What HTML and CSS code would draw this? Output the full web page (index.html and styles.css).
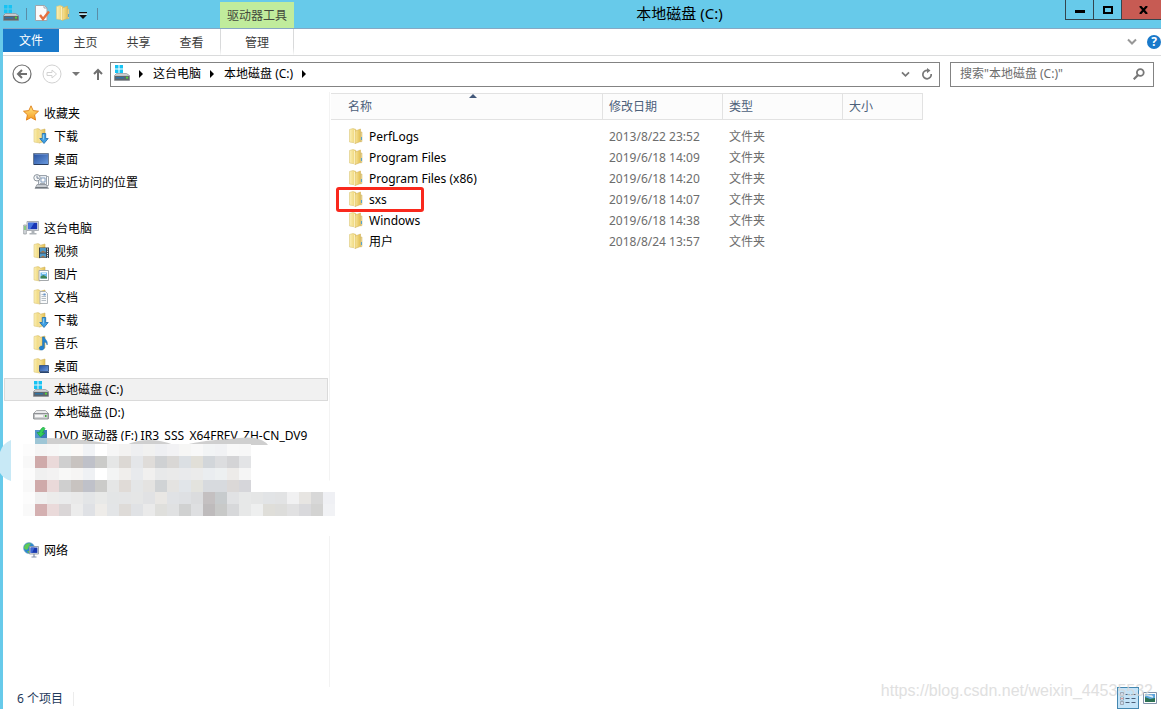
FILE: index.html
```html
<!DOCTYPE html>
<html lang="zh-CN">
<head>
<meta charset="utf-8">
<title>本地磁盘 (C:)</title>
<link rel="stylesheet" href="styles.css">
</head>
<body>
<svg class="defs" aria-hidden="true">
  <defs>
    <linearGradient id="gFolder" x1="0" x2="1" y1="0" y2="0"><stop offset="0" stop-color="#fbf0b6"/><stop offset="1" stop-color="#ecd06c"/></linearGradient>
    <linearGradient id="gFlap" x1="0" x2="1" y1="0" y2="0"><stop offset="0" stop-color="#f8e59a"/><stop offset="1" stop-color="#e2bf52"/></linearGradient>
    <linearGradient id="gScreen" x1="0" x2="1" y1="0" y2="1"><stop offset="0" stop-color="#264f9c"/><stop offset="1" stop-color="#6b9be0"/></linearGradient>
    <linearGradient id="gDisk" x1="0" x2="0" y1="0" y2="1"><stop offset="0" stop-color="#d8dadd"/><stop offset="1" stop-color="#83878d"/></linearGradient>
    <linearGradient id="gStar" x1="0" x2="0" y1="0" y2="1"><stop offset="0" stop-color="#ffe98a"/><stop offset="1" stop-color="#f79a1c"/></linearGradient>
  </defs>
  <symbol id="folder" viewBox="0 0 16 16">
    <path d="M1.500 1.500 5 .5l3 1V15l-6.500-1z" fill="url(#gFolder)" stroke="#dcc679" stroke-width=".6"/>
    <path d="M7 3.200 12.500 1v12.500L7 15.500z" fill="url(#gFlap)" stroke="#d3b45c" stroke-width=".6"/>
    <path d="M12.500 4h1.500v9.500l-1.500.5z" fill="#ecd795" stroke="#cdb05c" stroke-width=".5"/>
    <path d="M6.500 2v13" stroke="#fff6d0" stroke-width=".8"/><path d="M13.500 9v3" stroke="#55a4cf"/>
  </symbol>
  <symbol id="halfFolder" viewBox="0 0 16 16">
    <path d="M1 1.500 5 .5l2 1V15l-6-1z" fill="url(#gFolder)" stroke="#dcc679" stroke-width=".6"/>
    <path d="M6.500 2.500 12 1v12l-5.500 2z" fill="url(#gFlap)" stroke="#d2b45e" stroke-width=".6"/>
    <path d="M6.200 2v12.500" stroke="#fff3c4" stroke-width=".8"/>
  </symbol>
  <symbol id="download" viewBox="0 0 16 16">
    <use href="#halfFolder"/><path d="M9.300 5.500h3.400v5h2.500L11 15.500 6.800 10.500h2.500z" fill="#3f9fe2" stroke="#1c6bab" stroke-width=".8"/>
    <path d="M10.300 6.500v5" stroke="#9ad7fb"/>
  </symbol>
  <symbol id="video" viewBox="0 0 16 16">
    <use href="#halfFolder"/><path d="M6 4.500h10V15H6z" fill="#39434d"/><path d="M7 5h6v4.500H7zM7 10.500h6v4H7z" fill="#4e98c8"/><path d="m7 9.500 3-2 3 2zm0 5 3-2 3 2z" fill="#a3754b"/><path d="M14.500 5.500v10" stroke="#fff" stroke-dasharray="1.200 1"/>
  </symbol>
  <symbol id="pictures" viewBox="0 0 16 16">
    <use href="#halfFolder"/><path d="M6 4.500h9.500v10H6z" fill="#fff" stroke="#a5a9ac"/><path d="M7.500 6.500H14v6H7.500z" fill="#6db8ea"/><path d="m7.500 12.500 0-2 3-1.500 3.500 2v1.500z" fill="#3f8554"/><path d="M9 7.500h4" stroke="#d7effd"/>
  </symbol>
  <symbol id="documents" viewBox="0 0 16 16">
    <use href="#halfFolder"/><path d="M7 2.500h5.500l2 2v10H7z" fill="#f9fafb" stroke="#9ca3aa" stroke-width=".8"/><path d="M8.500 5.500H13m-4.500 2H13m-4.500 2H13m-4.500 2H13" stroke="#a3adb6" stroke-width=".8"/><path d="M10.500 4.500h2v2h-2z" fill="#6797cc"/>
  </symbol>
  <symbol id="music" viewBox="0 0 16 16">
    <use href="#halfFolder"/><path d="M9.500 2h1.800c.2 2.500 4 3.500 2.800 8-.3-2-1.300-2.800-2.800-3v5.500c0 3-5 3.500-5 .8 0-2 2-2.600 3.200-2z" fill="#2482cf" stroke="#1668aa" stroke-width=".5"/>
  </symbol>
  <symbol id="desktop" viewBox="0 0 16 16">
    <path d="M.5 2.500h15v11H.5z" fill="url(#gScreen)" stroke="#6d7d94"/><path d="M1 13.500h14" stroke="#263a5c"/><path d="M1.500 3.500h13" stroke="#6f91cd" stroke-width=".7"/>
  </symbol>
  <symbol id="deskFolder" viewBox="0 0 16 16">
    <use href="#halfFolder"/><path d="M6.500 7.500h9v6h-9z" fill="url(#gScreen)" stroke="#3e5a87"/><path d="M7 14.500h9" stroke="#28456f"/>
  </symbol>
  <symbol id="recent" viewBox="0 0 16 16">
    <path d="M5.500 1.500h8v9h-8z" fill="#e8edf3" stroke="#9ba3ac"/><path d="M8 4h4v4H8z" fill="#fff" stroke="#6f8eb3" stroke-width=".8"/><path d="M13.500 2.500h2v9h-2M7 9.500h5" fill="none" stroke="#a2a9b0"/>
    <path d="M4 10.500h9l2.500 4H2z" fill="#c8ccd1" stroke="#888e95" stroke-width=".7"/><path d="M2.500 13.500h12" stroke="#72787e"/>
    <circle cx="4" cy="3.800" r="3.200" fill="#f7f9fa" stroke="#8c949c"/><path d="M4 1.800v2.400h2" fill="none" stroke="#596b80" stroke-width=".8"/>
  </symbol>
  <symbol id="star" viewBox="0 0 16 16"><path d="m8 .8 2.200 4.800 5.300.6-3.900 3.600 1 5.300L8 12.500l-4.600 2.600 1-5.300L.5 6.200l5.300-.6z" fill="url(#gStar)" stroke="#df7d16" stroke-width=".9"/></symbol>
  <symbol id="monitor" viewBox="0 0 16 16">
    <path d="M.7 5h2.600v9H.7z" fill="#d8dcdf" stroke="#8c9297" stroke-width=".7"/><path d="M2 6v4" stroke="#45c531"/>
    <path d="M4 1.500h11.500v9H4z" fill="#dfe3e7" stroke="#9ba0a6" stroke-width=".8"/><path d="M5.200 2.700h9v6.500h-9z" fill="#1936b6"/><path d="M5.200 2.700h6l-4 6.500h-2z" fill="#4775df"/>
    <path d="M8.500 11h3v2h2v1.500h-7V13h2z" fill="#aeb3b8"/>
  </symbol>
  <symbol id="systemDisk" viewBox="0 0 16 16">
    <path d="M1 0h3.500v3.500H1zM5.500 0H9v3.500H5.500zM1 4.500h3.500V8H1zM5.500 4.500H9V8H5.500z" fill="#16c3f4"/>
    <path d="M9.500 8.500h3l3 2v5H.5v-5l2-2z" fill="url(#gDisk)" stroke="#7c8187" stroke-width=".6"/><path d="M.8 11h14.500v4H.8z" fill="#5e656c"/><path d="M2 12h8v1.500H2z" fill="#2f73a3"/><path d="M12 11.800h2v1.800h-2z" fill="#51d334"/>
  </symbol>
  <symbol id="disk" viewBox="0 0 16 16">
    <path d="M3.500 6.500h9l3 3v5H.5v-5z" fill="#e9eaeb" stroke="#9a9da0" stroke-width=".8"/><path d="M.8 9.500h14.400v5.500H.8z" fill="#d0d2d4" stroke="#7b7e82" stroke-width=".8"/><path d="M2 11h8v2H2z" fill="#f7f7f7"/><path d="M12 11h1.500v2H12z" fill="#45af3b"/>
  </symbol>
  <symbol id="dvd" viewBox="0 0 16 16">
    <path d="M2 3h12v13H2z" fill="#3f79bc"/><path d="M2 3h6v13H2z" fill="#5597cb"/><path d="M10.500 0 12 1.500 9.500 6H12l-4.500 4L4 5.500h2.500C7 3 8.500 1 10.500 0z" fill="#34ce59" stroke="#159c3b" stroke-width=".6"/>
  </symbol>
  <symbol id="network" viewBox="0 0 16 16">
    <circle cx="6" cy="6" r="5.500" fill="#2b86cf" stroke="#7ea7c4" stroke-width=".6"/><path d="M2 3c2-2 5-2 6-1L6 4 5 7 3 8 .8 6z" fill="#5fca56"/><path d="M4 9h3l-1 2.500z" fill="#61b954"/>
    <path d="M6.500 4.500h9v7.500h-9z" fill="#e3e7ec" stroke="#8a929d" stroke-width=".8"/><path d="M7.600 5.600h6.800v5.300H7.600z" fill="#1838af"/><path d="M7.600 5.600h4l-2.600 5.300H7.600z" fill="#3f69d4"/><path d="M11 12v2.500M8.500 15h5" stroke="#8290aa" stroke-width="1.200"/>
  </symbol>
  <symbol id="crumb" viewBox="0 0 6 8"><path d="m1 0 4 4-4 4z" fill="#000"/></symbol>
  <symbol id="chevron" viewBox="0 0 10 8"><path d="m1 1.500 4 4 4-4" fill="none" stroke="currentColor" stroke-width="2"/></symbol>
</svg>

<div class="window">
  <header class="titlebar">
    <div class="quick">
      <svg class="icon"><use href="#systemDisk"/></svg>
      <i class="tick"></i>
      <button type="button" aria-label="属性"><svg class="icon" viewBox="0 0 16 16"><path d="M1.500.5h9L13 3v12.500H1.500z" fill="#fbfbfc" stroke="#a0a6ad"/><path d="M10 .5V3h3" fill="none" stroke="#a0a6ad"/><path d="m6 10 3 4 6-7.500" fill="none" stroke="#e66f3e" stroke-width="2.400"/></svg></button>
      <button type="button" aria-label="新建文件夹"><svg class="icon"><use href="#folder"/></svg></button>
      <button type="button" class="more" aria-label="自定义快速访问工具栏"><svg width="8" height="7" viewBox="0 0 8 7"><path d="M0 0h8v1.500H0zM0 3h8L4 7z" fill="#111"/><path d="M0 2h8" stroke="#fff"/></svg></button>
      <i class="tick"></i>
    </div>
    <div class="tool-label">驱动器工具</div>
    <h1 class="caption">本地磁盘 (C:)</h1>
    <div class="controls">
      <button type="button" aria-label="最小化"><svg width="10" height="3" viewBox="0 0 10 3"><path d="M0 0h10v3H0z"/></svg></button>
      <button type="button" aria-label="最大化"><svg width="10" height="8" viewBox="0 0 10 8"><path d="M1 1h8v6H1z" fill="none" stroke="#000" stroke-width="2"/></svg></button>
      <button type="button" class="close" aria-label="关闭"><svg width="9" height="8" viewBox="0 0 9 8"><path d="m1 0 7 8M8 0 1 8" stroke="#000" stroke-width="2.200"/></svg></button>
    </div>
  </header>

  <nav class="ribbon">
    <button type="button" class="file">文件</button>
    <button type="button">主页</button>
    <button type="button">共享</button>
    <button type="button">查看</button>
    <button type="button" class="manage">管理</button>
    <div class="ribbon-end">
      <button type="button" aria-label="展开功能区"><svg width="10" height="8"><use href="#chevron"/></svg></button>
      <button type="button" class="help" aria-label="帮助">?</button>
    </div>
  </nav>

  <div class="navbar">
    <button type="button" aria-label="后退"><svg width="20" height="20" viewBox="0 0 20 20" fill="none" stroke="#6f6f6f"><circle cx="10" cy="10" r="9" stroke-width="1.200"/><path d="M15 10H6m4-4-4 4 4 4" stroke-width="2"/></svg></button>
    <button type="button" aria-label="前进"><svg width="20" height="20" viewBox="0 0 20 20" fill="none" stroke="#d2d2d2"><circle cx="10" cy="10" r="9"/><path d="M5 8.500h5V6l4.500 4-4.500 4v-2.500H5z"/></svg></button>
    <button type="button" class="history" aria-label="最近浏览的位置"><svg width="8" height="4" viewBox="0 0 8 4"><path d="M0 0h8L4 4z" fill="#777"/></svg></button>
    <button type="button" class="up" aria-label="上移"><svg width="10" height="12" viewBox="0 0 10 12" fill="none" stroke="#707070" stroke-width="2"><path d="M5 12V2M1 6l4-4 4 4"/></svg></button>
    <div class="address">
      <svg class="icon"><use href="#systemDisk"/></svg>
      <svg class="crumb"><use href="#crumb"/></svg><a href="#pc">这台电脑</a>
      <svg class="crumb"><use href="#crumb"/></svg><a href="#c">本地磁盘 (C:)</a>
      <svg class="crumb"><use href="#crumb"/></svg>
      <div class="address-end">
        <button type="button" aria-label="以前的位置"><svg width="9" height="7"><use href="#chevron"/></svg></button>
        <button type="button" aria-label="刷新"><svg width="12" height="12" viewBox="0 0 12 12"><path d="M7 2.500A4.200 4.200 0 1 0 10.200 6" fill="none" stroke="#777" stroke-width="1.700"/><path d="M6 0v5.200l3.500-2.600z" fill="#777"/></svg></button>
      </div>
    </div>
    <label class="search">
      <input type="text" aria-label="搜索" placeholder='搜索"本地磁盘 (C:)"'>
      <svg width="12" height="12" viewBox="0 0 12 12" fill="none" stroke="#777"><circle cx="7.300" cy="4.500" r="3.400" stroke-width="1.800"/><path d="m5 7-4.300 4.300" stroke-width="2.200"/></svg>
    </label>
  </div>

  <main class="content">
    <aside class="tree">
      <ul>
        <li class="root"><a href="#fav"><svg class="icon"><use href="#star"/></svg>收藏夹</a></li>
        <li><a href="#dl"><svg class="icon"><use href="#download"/></svg>下载</a></li>
        <li><a href="#desk"><svg class="icon"><use href="#desktop"/></svg>桌面</a></li>
        <li><a href="#recent-places"><svg class="icon"><use href="#recent"/></svg>最近访问的位置</a></li>
      </ul>
      <ul>
        <li class="root"><a href="#pc"><svg class="icon"><use href="#monitor"/></svg>这台电脑</a></li>
        <li><a href="#v"><svg class="icon"><use href="#video"/></svg>视频</a></li>
        <li><a href="#p"><svg class="icon"><use href="#pictures"/></svg>图片</a></li>
        <li><a href="#d"><svg class="icon"><use href="#documents"/></svg>文档</a></li>
        <li><a href="#dl"><svg class="icon"><use href="#download"/></svg>下载</a></li>
        <li><a href="#m"><svg class="icon"><use href="#music"/></svg>音乐</a></li>
        <li><a href="#desk"><svg class="icon"><use href="#deskFolder"/></svg>桌面</a></li>
        <li class="selected"><a href="#c"><svg class="icon"><use href="#systemDisk"/></svg>本地磁盘 (C:)</a></li>
        <li><a href="#dd"><svg class="icon"><use href="#disk"/></svg>本地磁盘 (D:)</a></li>
        <li class="dvd"><a href="#f"><svg class="icon"><use href="#dvd"/></svg>DVD 驱动器 (F:) IR3_SSS_X64FREV_ZH-CN_DV9</a>
          <svg class="mosaic" id="mosaic" width="335" height="108" viewBox="0 0 335 108" aria-hidden="true">
            <path d="M50 11h216v4H50zM323 56l6-6 6 6v50h-12z" fill="#fff"/>
            <path d="M47 8Q90 9 114 15H47zM126 15Q148 5 174 15zM184 15Q205 10 230 9 260 4 268 15z" fill="#cfcfcf"/>
            <path d="M35 8h12v7H35z" fill="#9ec6d6"/>
            <path d="M11 10Q3 13 0 22v21q4 6 11 8z" fill="#c8e9f6"/>
          </svg>
        </li>
      </ul>
      <ul class="net">
        <li class="root"><a href="#n"><svg class="icon"><use href="#network"/></svg>网络</a></li>
      </ul>
    </aside>

    <section class="files">
      <table>
        <colgroup><col class="c-name"><col class="c-date"><col class="c-type"><col class="c-size"></colgroup>
        <thead><tr><th scope="col">名称<svg class="sort" width="8" height="4" viewBox="0 0 8 4"><path d="m0 4 4-4 4 4z" fill="#43597a"/></svg></th><th scope="col">修改日期</th><th scope="col">类型</th><th scope="col">大小</th></tr></thead>
        <tbody>
          <tr><td><div class="name"><svg class="icon"><use href="#folder"/></svg>PerfLogs</div></td><td>2013/8/22 23:52</td><td>文件夹</td><td></td></tr>
          <tr><td><div class="name"><svg class="icon"><use href="#folder"/></svg>Program Files</div></td><td>2019/6/18 14:09</td><td>文件夹</td><td></td></tr>
          <tr><td><div class="name"><svg class="icon"><use href="#folder"/></svg>Program Files (x86)</div></td><td>2019/6/18 14:20</td><td>文件夹</td><td></td></tr>
          <tr><td><div class="name marked"><svg class="icon"><use href="#folder"/></svg>sxs</div></td><td>2019/6/18 14:07</td><td>文件夹</td><td></td></tr>
          <tr><td><div class="name"><svg class="icon"><use href="#folder"/></svg>Windows</div></td><td>2019/6/18 14:38</td><td>文件夹</td><td></td></tr>
          <tr><td><div class="name"><svg class="icon"><use href="#folder"/></svg>用户</div></td><td>2018/8/24 13:57</td><td>文件夹</td><td></td></tr>
        </tbody>
      </table>
    </section>
  </main>

  <footer class="status">
    <span class="count">6 个项目</span>
    <div class="views">
      <button type="button" class="on" aria-label="详细信息"><svg width="16" height="13" viewBox="0 0 16 13"><g fill="#fff" stroke="#8b97a5" stroke-width=".8"><path d="M.5.5h3v3h-3zM.5 5h3v3h-3zM.5 9.500h3v3h-3z"/></g><path d="M1.500 1.500h1v1h-1zM1.500 10.500h1v1h-1z" fill="#3b72b4"/><path d="M1.500 6h1v1h-1z" fill="#c2303a"/><path d="M5.500 2.500h4m2 0h4m-10 4h4m2 0h4m-10 4h4m2 0h4" stroke="#4c6079"/></svg></button>
      <button type="button" aria-label="大缩略图"><svg width="14" height="12" viewBox="0 0 14 12"><path d="M.5.5h13v11H.5z" fill="#fff" stroke="#8294ac"/><path d="M2 2h10v8H2z" fill="#5ba5dd"/><path d="m2 5 5 2 5-1v4H2z" fill="#2d7153"/><path d="m4 3 6 2" stroke="#d8effb" stroke-width="1.500"/></svg></button>
    </div>
    <span class="watermark">https://blog.csdn.net/weixin_44535532</span>
  </footer>
</div>
<script src="script.js"></script>
</body>
</html>
```
FILE: styles.css
```css
*, *::before, *::after { box-sizing: border-box; }
body {
  margin: 0;
  font: 12px/20px "Noto Sans", "Noto Sans CJK SC", sans-serif;
  color: #000;
  background: #fff;
}
button { border: 0; margin: 0; padding: 0; background: none; font: inherit; color: inherit; display: flex; align-items: center; justify-content: center; }
a { color: inherit; text-decoration: none; }
ul { list-style: none; margin: 0; padding: 0; }
svg { display: block; flex: none; }
.defs { position: absolute; width: 0; height: 0; }
.icon { width: 16px; height: 16px; margin-bottom: 2px; }

.window { min-height: 100vh; display: flex; flex-direction: column; border-left: 3px solid #67caea; }

.titlebar { display: flex; height: 29px; background: #67caea; border-bottom: 1px solid #86a8c4; }
.quick { display: flex; align-items: center; width: 217px; height: 28px; gap: 5px; }
.tick { width: 1px; height: 12px; background: #5b8da6; margin: 0 2px; }
.quick .more { margin: 2px 3px 0; }
.tool-label { width: 74px; height: 26px; margin-top: 2px; background: #c0ec9c; color: #434a3c; text-align: center; line-height: 28px; }
.caption { flex: 1; margin: 0; text-align: center; font-size: 15px; font-weight: 400; line-height: 27px; }
.controls { display: flex; height: 20px; }
.controls button { width: 28px; border-left: 1px solid #33454e; border-bottom: 1px solid #33454e; }
.controls button:first-child { padding-top: 4px; }
.controls .close { width: 40px; background: #c75b53; padding-left: 4px; }

.ribbon { display: flex; height: 27px; border-bottom: 1px solid #dadbdc; color: #3b3b3b; }
.ribbon > button { width: 53px; height: 26px; padding-top: 1px; }
.ribbon .file { width: 56px; height: 23px; padding: 0; background: #1979ca; color: #fff; }
.ribbon .manage { width: 74px; margin-left: 2px; border: solid; border-width: 0 1px; border-image: linear-gradient(#d9dadb 70%, #fff) 1; }
.ribbon-end { margin-left: auto; display: flex; align-items: center; gap: 10px; color: #979797; }
.ribbon .help { width: 14px; height: 14px; border-radius: 50%; background: #1979ca; color: #fff; font-weight: 700; line-height: 14px; }

.navbar { display: flex; align-items: center; height: 36px; padding: 0 7px 0 9px; }
.navbar > button + button { margin-left: 10px; }
.navbar > .up { margin: 0 7px 0 13px; }
.address { flex: 1; display: flex; align-items: center; height: 25px; border: 1px solid #838383; padding-left: 3px; }
.address .crumb { width: 6px; height: 8px; margin: 0 9px 0 8px; }
.address-end { margin-left: auto; display: flex; gap: 11px; padding-right: 6px; color: #777; }
.search { display: flex; align-items: center; width: 204px; height: 25px; margin-left: 10px; padding: 0 8px 0 9px; border: 1px solid #838383; }
.search input { flex: 1; min-width: 0; border: 0; padding: 0; outline: 0; font: inherit; background: none; }
.search input::placeholder { color: #6d6d6d; opacity: 1; }

.content { flex: 1; display: flex; }
.tree { width: 327px; padding-top: 10px; border-right: 1px solid #f3f3f3; }
.tree ul + ul { margin-top: 23px; }
.tree ul + .net { margin-top: 92px; }
.tree li { margin: 0 1px; height: 23px; padding-left: 28px; border: 1px solid transparent; }
.tree .root { padding-left: 18px; }
.tree .selected { background: #f1f1f1; border-color: #dadada; }
.tree a { display: flex; align-items: center; gap: 5px; height: 21px; white-space: nowrap; }
.dvd { position: relative; }
.mosaic { position: absolute; left: -5px; top: 5px; }

.files { flex: 1; padding: 1px 0 0 1px; min-width: 0; }
table { width: 592px; table-layout: fixed; border-collapse: separate; border-spacing: 0; }
.c-name { width: 272px; }
.c-date, .c-type { width: 120px; }
.c-size { width: 80px; }
th { position: relative; height: 27px; padding: 0 0 0 6px; text-align: left; font-weight: 400; color: #4c607a; background: #fcfcfc; border: solid #e2e2e2; border-width: 1px 1px 1px 0; }
th:first-child { padding-left: 17px; }
.sort { position: absolute; left: 138px; top: 0; }
tbody::before { content: ""; display: block; height: 6px; }
td { height: 21px; padding: 0 0 0 6px; color: #6d6d6d; }
td:first-child { color: #000; padding-left: 17px; }
.name { display: flex; align-items: center; gap: 5px; height: 21px; position: relative; }
.marked::after { content: ""; position: absolute; left: -12px; top: -2px; width: 88px; height: 25px; border: 3px solid #f9281c; border-radius: 3px; }

.status { position: relative; display: flex; align-items: center; height: 22px; padding: 0 4px 0 14px; color: #1e395b; }
.count { margin-top: 2px; padding-right: 10px; border-right: 1px solid #ececec; line-height: 14px; }
.views { margin-left: auto; display: flex; align-items: center; gap: 4px; }
.views .on { width: 22px; height: 22px; background: #c3e3f8; border: 1px solid #4487b0; }
.watermark { position: absolute; right: 8px; top: -8px; font: 16px/24px "Liberation Sans", sans-serif; color: #d9d9d9; opacity: .8; }
```
FILE: script.js
```js
// Censor mosaic: one row of 12px cells per line, as six-digit hex colours.
const rows = [
  "fcfcfc f5f5f5 f7f7f7 f7faf9 fbf9f7 f1f3f6 ffffff f6f6f6 f3f2f1 eeeff1 f1f1f0 eeeff2 f2f2f4 f6f6f5 f8f8f8 f2f4f5 f1f2f4 f8f8f8 f7f7f7",
  "f8f8f8 cfaaaa ead9d9 cfcfcf c8c3c0 bfc1c9 cbcbc9 e5e6e6 dcd8d4 e4e6e9 dfdcd9 cfd1d3 d9d7d5 dbdfe3 e1dfd8 d2d6da dcdddf d4d4d6 e3e4e6",
  "fcfcfc f0f0f0 f3f2f2 f8f8f7 f6f5f4 eff1f4 ffffff f3f4f4 f0eeec e8eaed f1f0ef e8e9ea eaeaea e9eaec ebebeb eaedf0 edf0f1 edebe9 f5f5f5",
  "f8f8f8 cfaaaa ead9d9 cfcfcf c8c3c0 bfc1c9 cbcbc9 e5e6e6 e0dbd7 e4e6e7 e4e3e1 d0d3d5 e4e3e1 e1e5e9 e3e3de d7dade d7dade dbd8d7 d6d6da",
  "fcfcfc f0f0f0 ececeb eaebec e9e9e9 e3e5e7 e8e9e8 e3e5e6 e4e5e6 e5e6e6 e1e2e4 e9e7e4 e0e2e5 dee0e3 dbdcde c4c0c1 c7cbcd e1e2e4 e7e8e8 e5e6e6 e2e4e6 e2e3e4 f1f1f2 e7e5e2 d8d8d8 eff0f4",
  "f9f9f9 d4b0b1 eadada dad6d7 ececec dfe1e5 eeece9 e3e5e7 dedbd8 e0e2e5 eaeaea dfdfdc e0e1e2 d0d1d1 dedfe1 bebbbc c8c9c8 d7d8da e7e8e8 eeefef dfded9 dddddb e1e1e2 d9d9dc d3d3d2 f1f2f5"
];
const mosaic = document.getElementById("mosaic");
rows.forEach((row, r) => row.split(" ").forEach((colour, c) => {
  const cell = document.createElementNS("http://www.w3.org/2000/svg", "rect");
  cell.setAttribute("x", 23 + c * 12);
  cell.setAttribute("y", 14 + r * 12);
  cell.setAttribute("width", 12);
  cell.setAttribute("height", 12);
  cell.setAttribute("fill", "#" + colour);
  mosaic.append(cell);
}));
```
